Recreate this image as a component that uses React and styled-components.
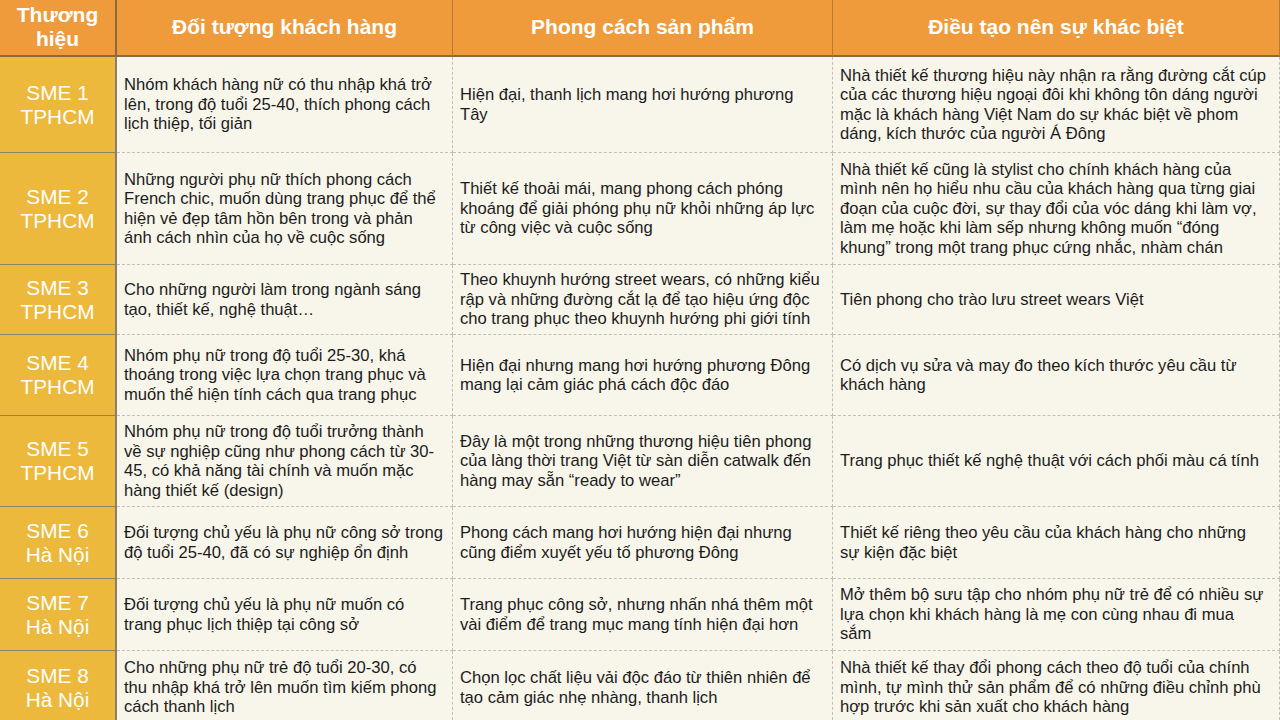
import React from "react";
import styled, { createGlobalStyle } from "styled-components";

const GlobalStyle = createGlobalStyle`
  html, body {
    margin: 0;
    padding: 0;
    background: #f8f5ea;
    overflow: hidden;
  }
  body {
    font-family: "Liberation Sans", Arial, sans-serif;
  }
`;

const Table = styled.div`
  display: grid;
  grid-template-columns: 117px 336px 380px 447px;
  grid-template-rows: 57px ${(p) => p.rows};
  width: 1280px;
  height: 720px;
  overflow: hidden;
  background: #f8f5ea;
`;

const HeadCell = styled.div`
  display: flex;
  align-items: center;
  justify-content: center;
  text-align: center;
  background: #ef9b3b;
  color: #ffffff;
  font-weight: bold;
  font-size: 21px;
  line-height: 24px;
  border-bottom: 2px solid #8c6a3e;
  border-right: ${(p) => (p.$first ? "2px solid #8c6a3e" : "1px solid #b87a32")};
  box-sizing: border-box;
  padding-bottom: 2px;
`;

const BrandCell = styled.div`
  display: flex;
  align-items: center;
  justify-content: center;
  text-align: center;
  background: #edb93c;
  color: #ffffff;
  font-size: 20.8px;
  line-height: 24px;
  border-right: 2px solid #8a8070;
  border-bottom: 1px solid #8a8070;
  box-sizing: border-box;
`;

const Cell = styled.div`
  display: flex;
  flex-direction: column;
  justify-content: center;
  padding: 0 6px 0 7px;
  color: #1c1c1c;
  font-size: 16.6px;
  line-height: 19.5px;
  border-right: 1px dashed #c4c0b4;
  border-bottom: 1px dashed #c4c0b4;
  box-sizing: border-box;
  overflow: hidden;
`;

const Line = styled.span`
  display: block;
  white-space: nowrap;
`;

const rows = [
  {
    brand: ["SME 1", "TPHCM"],
    h: 96,
    a: [
      "Nhóm khách hàng nữ có thu nhập khá trở",
      "lên, trong độ tuổi 25-40, thích phong cách",
      "lịch thiệp, tối giản",
    ],
    b: ["Hiện đại, thanh lịch mang hơi hướng phương", "Tây"],
    c: [
      "Nhà thiết kế thương hiệu này nhận ra rằng đường cắt cúp",
      "của các thương hiệu ngoại đôi khi không tôn dáng người",
      "mặc là khách hàng Việt Nam do sự khác biệt về phom",
      "dáng, kích thước của người Á Đông",
    ],
  },
  {
    brand: ["SME 2", "TPHCM"],
    h: 112,
    a: [
      "Những người phụ nữ thích phong cách",
      "French chic, muốn dùng trang phục để thể",
      "hiện vẻ đẹp tâm hồn bên trong và phản",
      "ánh cách nhìn của họ về cuộc sống",
    ],
    b: [
      "Thiết kế thoải mái, mang phong cách phóng",
      "khoáng để giải phóng phụ nữ khỏi những áp lực",
      "từ công việc và cuộc sống",
    ],
    c: [
      "Nhà thiết kế cũng là stylist cho chính khách hàng của",
      "mình nên họ hiểu nhu cầu của khách hàng qua từng giai",
      "đoạn của cuộc đời, sự thay đổi của vóc dáng khi làm vợ,",
      "làm mẹ hoặc khi làm sếp nhưng không muốn “đóng",
      "khung” trong một trang phục cứng nhắc, nhàm chán",
    ],
  },
  {
    brand: ["SME 3", "TPHCM"],
    h: 70,
    a: ["Cho những người làm trong ngành sáng", "tạo, thiết kế, nghệ thuật…"],
    b: [
      "Theo khuynh hướng street wears, có những kiểu",
      "rập và những đường cắt lạ để tạo hiệu ứng độc",
      "cho trang phục theo khuynh hướng phi giới tính",
    ],
    c: ["Tiên phong cho trào lưu street wears Việt"],
  },
  {
    brand: ["SME 4", "TPHCM"],
    h: 81,
    a: [
      "Nhóm phụ nữ trong độ tuổi 25-30, khá",
      "thoáng trong việc lựa chọn trang phục và",
      "muốn thể hiện tính cách qua trang phục",
    ],
    b: ["Hiện đại nhưng mang hơi hướng phương Đông", "mang lại cảm giác phá cách độc đáo"],
    c: ["Có dịch vụ sửa và may đo theo kích thước yêu cầu từ", "khách hàng"],
  },
  {
    brand: ["SME 5", "TPHCM"],
    h: 91,
    a: [
      "Nhóm phụ nữ trong độ tuổi trưởng thành",
      "về sự nghiệp cũng như phong cách từ 30-",
      "45, có khả năng tài chính và muốn mặc",
      "hàng thiết kế (design)",
    ],
    b: [
      "Đây là một trong những thương hiệu tiên phong",
      "của làng thời trang Việt từ sàn diễn catwalk đến",
      "hàng may sẵn “ready to wear”",
    ],
    c: ["Trang phục thiết kế nghệ thuật với cách phối màu cá tính"],
  },
  {
    brand: ["SME 6", "Hà Nội"],
    h: 72,
    a: ["Đối tượng chủ yếu là phụ nữ công sở trong", "độ tuổi 25-40, đã có sự nghiệp ổn định"],
    b: ["Phong cách mang hơi hướng hiện đại nhưng", "cũng điểm xuyết yếu tố phương Đông"],
    c: ["Thiết kế riêng theo yêu cầu của khách hàng cho những", "sự kiện đặc biệt"],
  },
  {
    brand: ["SME 7", "Hà Nội"],
    h: 72,
    a: ["Đối tượng chủ yếu là phụ nữ muốn có", "trang phục lịch thiệp tại công sở"],
    b: [
      "Trang phục công sở, nhưng nhấn nhá thêm một",
      "vài điểm để trang mục mang tính hiện đại hơn",
    ],
    c: [
      "Mở thêm bộ sưu tập cho nhóm phụ nữ trẻ để có nhiều sự",
      "lựa chọn khi khách hàng là mẹ con cùng nhau đi mua",
      "sắm",
    ],
  },
  {
    brand: ["SME 8", "Hà Nội"],
    h: 74,
    a: [
      "Cho những phụ nữ trẻ độ tuổi 20-30, có",
      "thu nhập khá trở lên muốn tìm kiếm phong",
      "cách thanh lịch",
    ],
    b: [
      "Chọn lọc chất liệu vải độc đáo từ thiên nhiên để",
      "tạo cảm giác nhẹ nhàng, thanh lịch",
    ],
    c: [
      "Nhà thiết kế thay đổi phong cách theo độ tuổi của chính",
      "mình, tự mình thử sản phẩm để có những điều chỉnh phù",
      "hợp trước khi sản xuất cho khách hàng",
    ],
  },
];

const Lines = ({ items }) => items.map((t, i) => <Line key={i}>{t}</Line>);

export default function App() {
  return (
    <>
      <GlobalStyle />
      <Table rows={rows.map((r) => r.h + "px").join(" ")}>
        <HeadCell $first>
          Thương
          <br />
          hiệu
        </HeadCell>
        <HeadCell>Đối tượng khách hàng</HeadCell>
        <HeadCell>Phong cách sản phẩm</HeadCell>
        <HeadCell>Điều tạo nên sự khác biệt</HeadCell>
        {rows.map((r) => (
          <React.Fragment key={r.brand[0]}>
            <BrandCell>
              {r.brand[0]}
              <br />
              {r.brand[1]}
            </BrandCell>
            <Cell>
              <Lines items={r.a} />
            </Cell>
            <Cell>
              <Lines items={r.b} />
            </Cell>
            <Cell>
              <Lines items={r.c} />
            </Cell>
          </React.Fragment>
        ))}
      </Table>
    </>
  );
}
